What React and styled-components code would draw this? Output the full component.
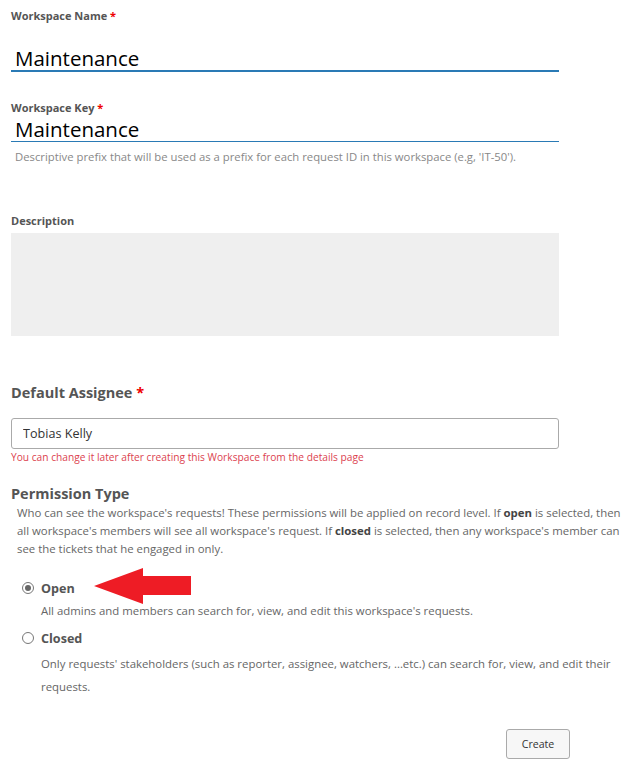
import React from 'react'
import styled, { createGlobalStyle } from 'styled-components'

const GlobalStyle = createGlobalStyle`
  body {
    margin: 0;
    background: #fff;
    font-family: "Open Sans", "Noto Sans", sans-serif;
  }
`

const Form = styled.form`
  width: 625px;
  box-sizing: border-box;
  padding: 9px 0 20px 11px;
  display: flex;
  flex-direction: column;
`

const Label = styled.label`
  display: block;
  font-size: 11px;
  font-weight: 700;
  line-height: 14px;
  color: #555;
  margin-top: ${(p) => p.$top || 0}px;
`

const Required = styled.span`
  color: #e00;
`

const LineInput = styled.input`
  display: block;
  width: 548px;
  box-sizing: border-box;
  border: 0;
  border-bottom: ${(p) => (p.$thick ? 2 : 1)}px solid #2a7ab5;
  outline: none;
  background: transparent;
  font-family: inherit;
  font-size: 20.5px;
  color: #000;
  padding: ${(p) => p.$pad}px 0 0 4px;
  height: ${(p) => p.$h}px;
  line-height: 24px;
`

const Hint = styled.div`
  font-size: 11.3px;
  line-height: 15px;
  color: #888;
  padding-left: 4px;
  margin-top: 7px;
`

const TextArea = styled.textarea`
  display: block;
  width: 548px;
  height: 103px;
  margin-top: 5px;
  box-sizing: border-box;
  border: 0;
  background: #efefef;
  resize: none;
  outline: none;
`

const Heading = styled.div`
  font-size: 14.5px;
  font-weight: 700;
  line-height: 20px;
  color: #555;
  margin-top: ${(p) => p.$top}px;
`

const BoxInput = styled.input`
  display: block;
  width: 548px;
  height: 31px;
  margin-top: 15px;
  box-sizing: border-box;
  border: 1px solid #aaa;
  border-radius: 3px;
  padding: 0 0 0 11px;
  font-family: inherit;
  font-size: 12.6px;
  color: #333;
  outline: none;
`

const ErrorHint = styled.div`
  font-size: 10.2px;
  line-height: 13px;
  color: #dc3f4f;
  margin-top: 2px;
`

const Paragraph = styled.p`
  margin: 0;
  padding-left: 6px;
  width: 604px;
  font-size: 11.4px;
  line-height: 18px;
  color: #666;
`

const Strong = styled.strong`
  color: #444;
`

const Options = styled.div`
  display: flex;
  flex-direction: column;
  margin-top: 20px;
  padding-left: 11px;
`

const Option = styled.div`
  display: grid;
  grid-template-columns: 19px 1fr;
  margin-top: ${(p) => p.$top || 0}px;
`

const OptionHead = styled.div`
  position: relative;
  grid-column: 1 / 3;
  display: flex;
  align-items: center;
  gap: 7px;
  height: 20px;
`

const Radio = styled.span`
  width: 12px;
  height: 12px;
  box-sizing: border-box;
  border-radius: 50%;
  border: 1px solid #777;
  display: flex;
  align-items: center;
  justify-content: center;

  &::after {
    content: '';
    width: 6px;
    height: 6px;
    border-radius: 50%;
    background: ${(p) => (p.$checked ? '#666' : 'transparent')};
  }
`

const OptionTitle = styled.span`
  font-size: 12.6px;
  font-weight: 700;
  color: #555;
`

const OptionDesc = styled.div`
  grid-column: 2;
  width: ${(p) => p.$w}px;
  margin-top: ${(p) => p.$top}px;
  font-size: 11.4px;
  line-height: ${(p) => p.$lh}px;
  color: #666;
`

const Arrow = styled.svg`
  position: absolute;
  left: 72px;
  top: -10px;
`

const Actions = styled.div`
  display: flex;
  padding-left: 495px;
  margin-top: 31px;
`

const Button = styled.button`
  width: 64px;
  height: 30px;
  border: 1px solid #aaa;
  border-radius: 3px;
  background: #f7f7f7;
  font-family: inherit;
  font-size: 10.6px;
  color: #333;
`

export default function App() {
  return (
    <>
      <GlobalStyle />
      <Form onSubmit={(e) => e.preventDefault()}>
        <Label>
          Workspace Name <Required>*</Required>
        </Label>
        <LineInput $thick $pad={22} $h={49} defaultValue="Maintenance" />

        <Label $top={29}>
          Workspace Key <Required>*</Required>
        </Label>
        <LineInput $pad={2} $h={27} defaultValue="Maintenance" />
        <Hint>
          Descriptive prefix that will be used as a prefix for each request ID in this workspace (e.g, 'IT-50').
        </Hint>

        <Label $top={50}>Description</Label>
        <TextArea />

        <Heading $top={47}>
          Default Assignee <Required>*</Required>
        </Heading>
        <BoxInput defaultValue="Tobias Kelly" />
        <ErrorHint>You can change it later after creating this Workspace from the details page</ErrorHint>

        <Heading $top={20}>Permission Type</Heading>
        <Paragraph>
          Who can see the workspace's requests! These permissions will be applied on record level. If{' '}
          <Strong>open</Strong> is selected, then all workspace's members will see all workspace's request. If{' '}
          <Strong>closed</Strong> is selected, then any workspace's member can see the tickets that he engaged in only.
        </Paragraph>

        <Options>
          <Option>
            <OptionHead>
              <Radio $checked />
              <OptionTitle>Open</OptionTitle>
              <Arrow width="98" height="37" viewBox="0 0 98 37">
                <polygon points="0,18 49,0 49,8 97,8 97,27 49,27 49,36" fill="#ee1c25" />
              </Arrow>
            </OptionHead>
            <OptionDesc $w={560} $top={4} $lh={18}>
              All admins and members can search for, view, and edit this workspace's requests.
            </OptionDesc>
          </Option>
          <Option $top={8}>
            <OptionHead>
              <Radio />
              <OptionTitle>Closed</OptionTitle>
            </OptionHead>
            <OptionDesc $w={580} $top={4} $lh={23}>
              Only requests' stakeholders (such as reporter, assignee, watchers, ...etc.) can search for, view, and
              edit their requests.
            </OptionDesc>
          </Option>
        </Options>

        <Actions>
          <Button type="submit">Create</Button>
        </Actions>
      </Form>
    </>
  )
}
